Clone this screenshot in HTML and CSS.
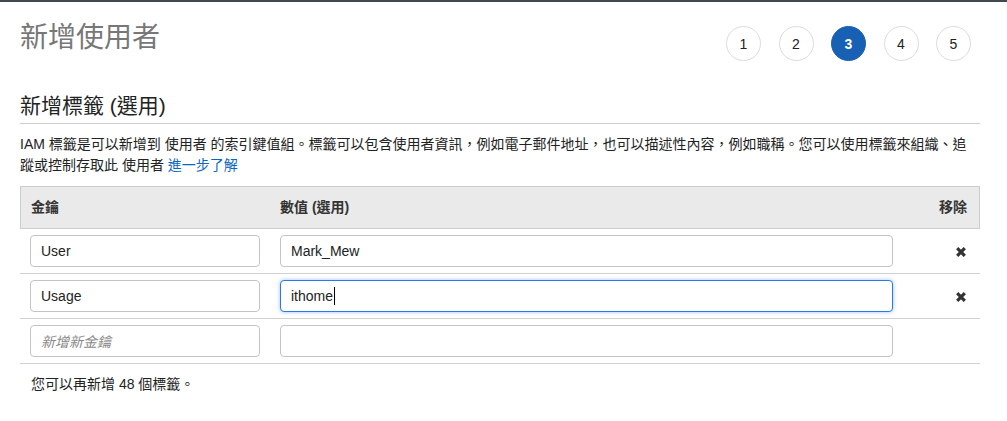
FILE: index.html
```html
<!DOCTYPE html>
<html lang="zh-Hant">
<head>
<meta charset="utf-8">
<title>新增使用者</title>
<link rel="stylesheet" href="styles.css">
</head>
<body>
<div class="page">
  <header class="page-header">
    <h1 class="title">新增使用者</h1>
    <ol class="steps">
      <li class="step">1</li>
      <li class="step">2</li>
      <li class="step active">3</li>
      <li class="step">4</li>
      <li class="step">5</li>
    </ol>
  </header>

  <h2 class="section-title">新增標籤 (選用)</h2>
  <p class="intro">IAM 標籤是可以新增到 使用者 的索引鍵值組。標籤可以包含使用者資訊，例如電子郵件地址，也可以描述性內容，例如職稱。您可以使用標籤來組織、追<br>蹤或控制存取此 使用者 <a class="link" href="#">進一步了解</a></p>

  <table class="tags">
    <thead>
      <tr>
        <th class="col-key">金鑰</th>
        <th class="col-value">數值 (選用)</th>
        <th class="col-remove">移除</th>
      </tr>
    </thead>
    <tbody>
      <tr>
        <td><div class="field">User</div></td>
        <td><div class="field">Mark_Mew</div></td>
        <td class="remove"><svg class="x-icon" width="12" height="12" viewBox="0 0 12 12"><path d="M2.2 2.2 L9.8 9.8 M9.8 2.2 L2.2 9.8" stroke="#333" stroke-width="3.2" stroke-linecap="butt" fill="none"/></svg></td>
      </tr>
      <tr>
        <td><div class="field">Usage</div></td>
        <td><div class="field focused">ithome<span class="caret"></span></div></td>
        <td class="remove"><svg class="x-icon" width="12" height="12" viewBox="0 0 12 12"><path d="M2.2 2.2 L9.8 9.8 M9.8 2.2 L2.2 9.8" stroke="#333" stroke-width="3.2" stroke-linecap="butt" fill="none"/></svg></td>
      </tr>
      <tr>
        <td><div class="field placeholder">新增新金鑰</div></td>
        <td><div class="field"></div></td>
        <td class="remove"></td>
      </tr>
    </tbody>
  </table>

  <p class="remaining">您可以再新增 48 個標籤。</p>
</div>
</body>
</html>
```

FILE: styles.css
```css
* {
  box-sizing: border-box;
}

html, body {
  margin: 0;
  padding: 0;
  background: #ffffff;
}

body {
  border-top: 2px solid #424850;
  font-family: "Liberation Sans", "Noto Sans CJK TC", Arial, sans-serif;
  font-size: 14px;
  color: #222;
}

.page {
  padding: 0 27px 0 20px;
}

.page-header {
  display: flex;
  justify-content: space-between;
  align-items: flex-start;
}

.title {
  margin: 19px 0 0;
  font-size: 28px;
  line-height: 34px;
  font-weight: normal;
  color: #777;
}

.steps {
  display: flex;
  gap: 17.5px;
  list-style: none;
  margin: 24px 9px 0 0;
  padding: 0;
}

.step {
  width: 35px;
  height: 35px;
  border: 1px solid #dcdcdc;
  border-radius: 50%;
  display: flex;
  align-items: center;
  justify-content: center;
  font-size: 14px;
  color: #222;
}

.step.active {
  background: #1760b4;
  border-color: #1760b4;
  color: #fff;
  font-weight: bold;
}

.section-title {
  margin: 32px 0 0;
  padding-bottom: 4px;
  font-size: 21px;
  line-height: 26px;
  font-weight: normal;
  color: #222;
  border-bottom: 1px solid #cccccc;
}

.intro {
  margin: 10px 0 0;
  font-size: 14px;
  line-height: 21px;
  color: #222;
}

.link {
  color: #0b67c2;
  text-decoration: none;
}

.tags {
  width: 100%;
  margin-top: 10px;
  border-collapse: separate;
  border-spacing: 0;
  table-layout: fixed;
}

.tags th {
  background: #eaeaea;
  border-top: 1px solid #cccccc;
  border-bottom: 1px solid #cccccc;
  padding: 10px 10px;
  line-height: 21px;
  font-size: 14px;
  font-weight: bold;
  color: #333;
  text-align: left;
}

.tags th.col-key {
  width: 250px;
  border-left: 1px solid #cccccc;
}

.tags th.col-remove {
  width: 77px;
  text-align: right;
  padding-right: 12px;
  border-right: 1px solid #cccccc;
}

.tags td {
  padding: 6px 10px;
  border-bottom: 1px solid #d2d2d2;
  vertical-align: middle;
}

.tags td.remove {
  text-align: right;
  padding-right: 13px;
}

.x-icon {
  display: inline-block;
  vertical-align: middle;
}

.field {
  display: flex;
  align-items: center;
  height: 32px;
  padding: 0 10px;
  border: 1px solid #c4c4c4;
  border-radius: 4px;
  background: #fff;
  font-size: 14px;
  color: #222;
}

.field.focused {
  border-color: #2a7ae2;
  box-shadow: 0 0 4px rgba(42, 122, 226, 0.45);
}

.field.placeholder {
  color: #8a8a8a;
  font-style: italic;
}

.caret {
  display: inline-block;
  width: 1px;
  height: 18px;
  margin-left: 1px;
  background: #000;
}

.remaining {
  margin: 10px 0 0;
  padding-left: 11px;
  font-size: 14px;
  line-height: 21px;
  color: #222;
}
```
